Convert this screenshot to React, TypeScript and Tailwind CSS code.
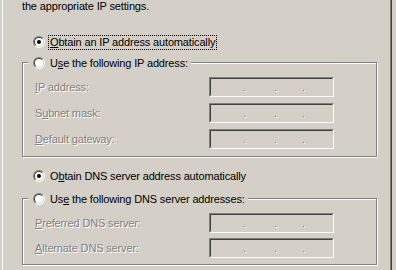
import React from "react";

function Radio({ checked }: { checked?: boolean }) {
  return (
    <span className="flex h-[12px] w-[12px] shrink-0 items-center justify-center rounded-full border border-t-[#808080] border-l-[#808080] border-b-white border-r-white">
      <span className="flex h-[10px] w-[10px] items-center justify-center rounded-full border border-t-[#404040] border-l-[#404040] border-b-[#d4d0c8] border-r-[#d4d0c8] bg-white">
        {checked && <span className="h-[4px] w-[4px] rounded-full bg-black" />}
      </span>
    </span>
  );
}

function IpBox() {
  return (
    <div className="h-[20px] w-[125px] shrink-0 border border-t-[#808080] border-l-[#808080] border-b-white border-r-white">
      <div className="flex h-full items-start border border-t-[#404040] border-l-[#404040] border-b-[#d4d0c8] border-r-[#d4d0c8] pt-[2px] leading-[13px] text-[#808080] [text-shadow:1px_1px_0_#fff]">
        <span className="w-[32px]" />
        <span className="w-[3px]">.</span>
        <span className="w-[28px]" />
        <span className="w-[3px]">.</span>
        <span className="w-[25px]" />
        <span className="w-[3px]">.</span>
      </div>
    </div>
  );
}

function Field({ label, k, rest }: { label: string; k: string; rest: string }) {
  return (
    <div className="flex h-[20px] items-center">
      <span className="w-[174px] shrink-0 text-[#808080] [text-shadow:1px_1px_0_#fff]">
        {label}
        <u>{k}</u>
        {rest}
      </span>
      <IpBox />
    </div>
  );
}

function Legend({ children }: { children: React.ReactNode }) {
  return (
    <div className="-mt-[7px] ml-[5px] flex h-[14px] items-center self-start bg-[#d4d0c8] pl-[5px] pr-[3px]">
      <Radio />
      <span className="ml-[5px]">{children}</span>
    </div>
  );
}

export default function App() {
  return (
    <div className="h-[270px] w-[396px] overflow-hidden bg-[#d4d0c8] font-['Liberation_Sans',Arial,sans-serif] text-[11px] leading-[13px] tracking-[-0.15px] text-black">
      <div className="ml-[2px] h-full w-[390px] border-l border-r border-l-white border-r-[#404040]">
        <div className="h-full border-r border-r-[#808080] pl-[19px]">
          <p className="h-[13px]">the appropriate IP settings.</p>

          <div className="mt-[22px] flex h-[14px] items-center pl-[11px]">
            <Radio checked />
            <span className="ml-[3px] border border-dotted border-black px-[1px]">
              <u>O</u>btain an IP address automatically
            </span>
          </div>

          <div className="mt-[13px] flex w-[355px] flex-col border border-[#808080] pb-[7px] [box-shadow:inset_1px_1px_0_#fff,1px_1px_0_#fff]">
            <Legend>
              U<u>s</u>e the following IP address:
            </Legend>
            <div className="mt-[7px] flex flex-col gap-[6px] pl-[12px]">
              <Field label="" k="I" rest="P address:" />
              <Field label="S" k="u" rest="bnet mask:" />
              <Field label="" k="D" rest="efault gateway:" />
            </div>
          </div>

          <div className="mt-[12px] flex h-[14px] items-center pl-[11px]">
            <Radio checked />
            <span className="ml-[4px] px-[1px]">
              O<u>b</u>tain DNS server address automatically
            </span>
          </div>

          <div className="mt-[15px] flex w-[355px] flex-col border border-[#808080] pb-[6px] [box-shadow:inset_1px_1px_0_#fff,1px_1px_0_#fff]">
            <Legend>
              Us<u>e</u> the following DNS server addresses:
            </Legend>
            <div className="mt-[7px] flex flex-col gap-[5px] pl-[12px]">
              <Field label="" k="P" rest="referred DNS server:" />
              <Field label="" k="A" rest="lternate DNS server:" />
            </div>
          </div>
        </div>
      </div>
    </div>
  );
}
